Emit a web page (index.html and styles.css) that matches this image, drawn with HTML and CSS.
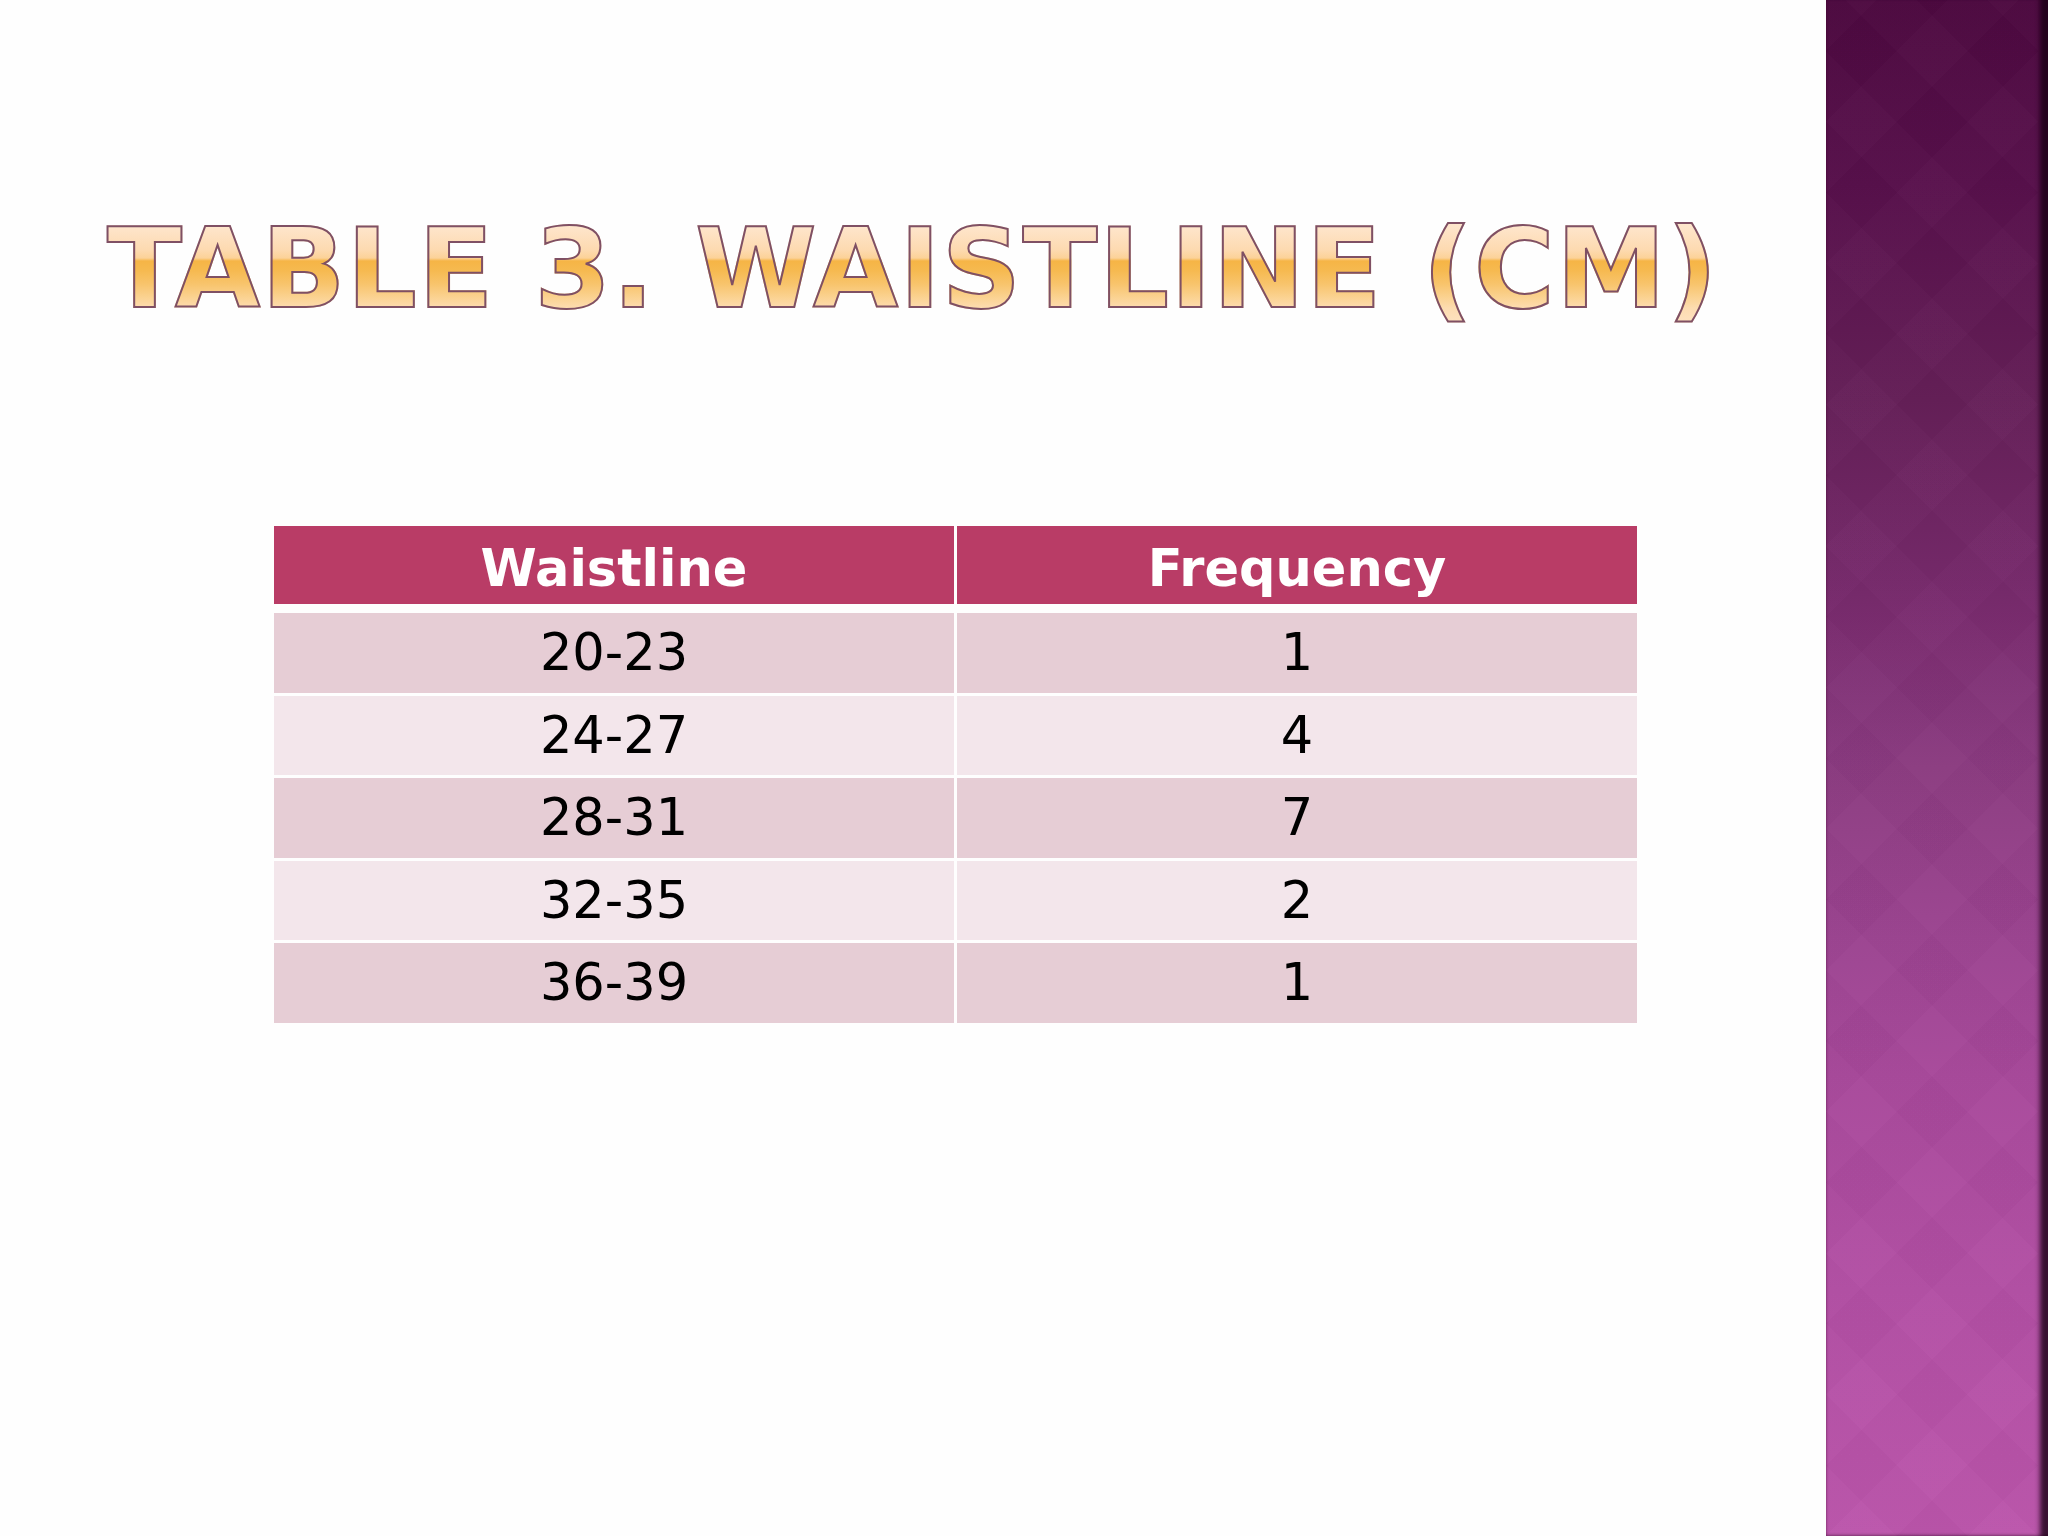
FILE: index.html
```html
<!DOCTYPE html>
<html lang="en">
<head>
<meta charset="utf-8">
<title>Table 3. Waistline (cm)</title>
<link rel="stylesheet" href="styles.css">
</head>
<body>
<div class="slide">
  <main class="content">
    <h1 class="title">TABLE 3. WAISTLINE (CM)</h1>
    <div class="table">
      <div class="cell head">Waistline</div>
      <div class="cell head">Frequency</div>
      <div class="cell odd">20-23</div>
      <div class="cell odd">1</div>
      <div class="cell even">24-27</div>
      <div class="cell even">4</div>
      <div class="cell odd">28-31</div>
      <div class="cell odd">7</div>
      <div class="cell even">32-35</div>
      <div class="cell even">2</div>
      <div class="cell odd">36-39</div>
      <div class="cell odd">1</div>
    </div>
  </main>
  <aside class="sidebar"></aside>
</div>
</body>
</html>
```
FILE: styles.css
```css
html, body {
  margin: 0;
  padding: 0;
  background: #ffffff;
}
.slide {
  width: 2048px;
  height: 1536px;
  display: flex;
  overflow: hidden;
  background: #fefefe;
}
.content {
  width: 1826px;
  flex: none;
  padding-top: 204px;
  box-sizing: border-box;
}
.title {
  margin: 0 0 192px 107px;
  font-family: "DejaVu Sans", Verdana, sans-serif;
  font-weight: bold;
  font-size: 110px;
  line-height: 130px;
  letter-spacing: 1.4px;
  white-space: nowrap;
  color: transparent;
  background: linear-gradient(to bottom,
    #fee9d4 0px, #fee5ca 24px, #fddab0 46px, #fcd298 54px,
    #f6b546 57px, #f6b94f 66px, #f8c46c 80px, #fbd393 94px, #fddcb0 104px, #fee6cc 130px);
  -webkit-background-clip: text;
  background-clip: text;
  -webkit-text-stroke: 2px #7f5064;
}
.table {
  margin-left: 274px;
  width: 1363px;
  display: grid;
  grid-template-columns: 1fr 1fr;
  grid-template-rows: 84px repeat(5, 79.5px);
  column-gap: 3px;
  row-gap: 3px;
}
.cell {
  font-family: "DejaVu Sans", Verdana, sans-serif;
  font-size: 51px;
  line-height: 79.5px;
  text-align: center;
  color: #000000;
}
.head {
  background: #b93c66;
  color: #ffffff;
  font-weight: bold;
  line-height: 78px;
  padding-top: 4px;
  box-sizing: border-box;
  margin-bottom: 6px;
}
.odd { background: #e6cdd5; }
.even { background: #f3e6eb; }
.sidebar {
  flex: 1;
  position: relative;
  background: linear-gradient(to bottom,
    #4d0940 0%, #58104c 12%, #651f58 26%, #76296b 38%, #8b3b80 50%, #9b4390 61%, #a7489a 70%, #b24fa4 84%, #bb55ab 100%);
  box-shadow: inset -12px 0 5px -4px rgba(25, 0, 20, 0.8), inset 2px 0 2px -1px rgba(60, 0, 40, 0.3), inset 0 -3px 3px -2px rgba(40, 0, 30, 0.4);
}
.sidebar::before {
  content: "";
  position: absolute;
  inset: 0 10px 0 0;
  background:
    repeating-linear-gradient(45deg, rgba(255,255,255,0.01) 0 50px, rgba(0,0,0,0.01) 50px 100px),
    repeating-linear-gradient(-45deg, rgba(255,255,255,0.01) 0 50px, rgba(0,0,0,0.01) 50px 100px);
}
```
